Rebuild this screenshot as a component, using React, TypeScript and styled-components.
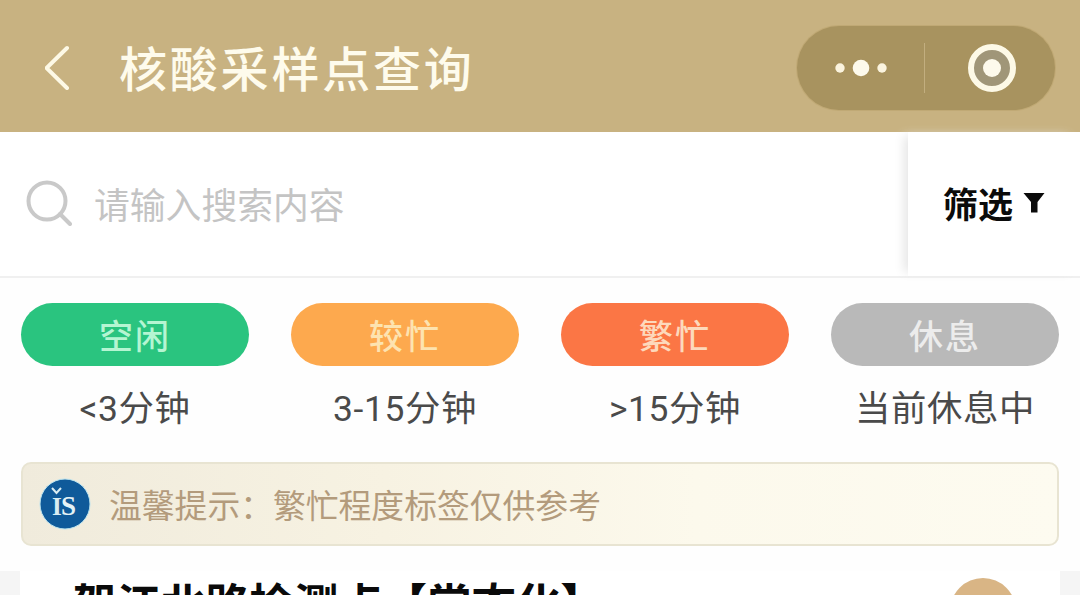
import React from 'react';
import styled, { createGlobalStyle } from 'styled-components';

const GlobalStyle = createGlobalStyle`
  html, body {
    margin: 0;
    padding: 0;
    background: #fefefe;
    overflow: hidden;
    font-family: "Noto Sans CJK SC", "Noto Sans", sans-serif;
  }
`;

const Page = styled.div`
  width: 1080px;
  height: 595px;
  overflow: hidden;
  display: flex;
  flex-direction: column;
`;

const NavBar = styled.header`
  height: 132px;
  flex: none;
  background: #c8b281;
  display: flex;
  align-items: center;
  padding: 0 25px 0 45px;
`;

const BackIcon = styled.svg`
  width: 26px;
  height: 48px;
  flex: none;
`;

const NavTitle = styled.h1`
  flex: 1;
  margin: 0 0 0 48px;
  font-size: 48px;
  font-weight: 500;
  letter-spacing: 2.8px;
  line-height: 60px;
  color: #fefbec;
`;

const Capsule = styled.div`
  width: 258px;
  height: 84px;
  margin-top: 3px;
  border-radius: 42px;
  background: #a8935f;
  box-shadow: 0 0 0 1px #c0a975;
  display: flex;
  align-items: center;
`;

const CapsuleHalf = styled.div<{ $inset?: number }>`
  flex: 1;
  height: 100%;
  box-sizing: border-box;
  padding-left: ${(props) => props.$inset ?? 0}px;
  display: flex;
  align-items: center;
  justify-content: center;
`;

const CapsuleDivider = styled.div`
  width: 1px;
  height: 50px;
  flex: none;
  background: #c2ae7f;
`;

const SearchRow = styled.div`
  height: 146px;
  flex: none;
  background: #fff;
  border-bottom: 2px solid #f0f0f0;
  box-sizing: border-box;
  display: flex;
`;

const SearchBox = styled.div`
  flex: 1;
  display: flex;
  align-items: center;
  padding: 0 0 2px 26px;
  gap: 22px;
`;

const Placeholder = styled.span`
  font-size: 35.8px;
  line-height: 46px;
  color: #c4c4c4;
`;

const FilterButton = styled.div`
  width: 172px;
  flex: none;
  display: flex;
  align-items: center;
  gap: 10px;
  padding: 0 0 2px 35px;
  box-sizing: border-box;
  background: #fff;
  box-shadow: -8px 0 10px -4px #e6e6e6;
`;

const FilterLabel = styled.span`
  font-size: 35px;
  font-weight: 700;
  line-height: 46px;
  color: #0b0b0b;
`;

const Legend = styled.div`
  display: grid;
  grid-template-columns: repeat(4, 228px);
  column-gap: 42px;
  padding: 25px 21px 0;
  height: 184px;
  flex: none;
  box-sizing: border-box;
`;

const LegendItem = styled.div`
  display: flex;
  flex-direction: column;
  align-items: center;
`;

const Pill = styled.div<{ $color: string; $text: string }>`
  width: 100%;
  height: 63px;
  border-radius: 32px;
  background: ${(props) => props.$color};
  color: ${(props) => props.$text};
  font-size: 34px;
  font-weight: 500;
  line-height: 63px;
  text-align: center;
  letter-spacing: 2px;
`;

const LegendLabel = styled.div`
  margin-top: 19px;
  font-family: Roboto, "Noto Sans CJK SC", sans-serif;
  font-size: 35.4px;
  letter-spacing: 0.6px;
  line-height: 48px;
  color: #4a4a4a;
  white-space: nowrap;
`;

const Notice = styled.div`
  margin: 0 21px;
  height: 84px;
  flex: none;
  box-sizing: border-box;
  border: 2px solid #e8e4d2;
  border-radius: 10px;
  background: linear-gradient(90deg, #f0ebdc 0%, #f7f2e2 35%, #fcf9ec 65%, #fdfbf0 100%);
  display: flex;
  align-items: center;
  padding-left: 16px;
  gap: 18px;
`;

const NoticeText = styled.span`
  font-size: 32.8px;
  line-height: 44px;
  color: #b39b7c;
  white-space: nowrap;
`;

const ListArea = styled.div`
  flex: 1;
  margin-top: 25px;
  background: #f5f5f5;
  padding: 0 20px;
`;

const Card = styled.div`
  height: 100%;
  background: #fff;
  display: flex;
  justify-content: space-between;
  padding: 3px 44px 0 52px;
  overflow: hidden;
`;

const CardTitle = styled.div`
  font-size: 44.4px;
  font-weight: 700;
  line-height: 56px;
  color: #0a0a0a;
  white-space: nowrap;
`;

const Avatar = styled.div`
  width: 66px;
  height: 66px;
  flex: none;
  margin-top: 4px;
  border-radius: 50%;
  background: #d9b585;
`;

const legend = [
  { name: '空闲', time: '<3分钟', color: '#2ac47f', text: '#b5f5d2' },
  { name: '较忙', time: '3-15分钟', color: '#fda94e', text: '#fde3b0' },
  { name: '繁忙', time: '>15分钟', color: '#fb7645', text: '#fdd9bc' },
  { name: '休息', time: '当前休息中', color: '#b9b9b9', text: '#ececec' },
];

const App: React.FC = () => {
  return (
    <Page>
      <GlobalStyle />
      <NavBar>
        <BackIcon viewBox="0 0 26 48">
          <path d="M22 6 L1.5 26 L22 46" fill="none" stroke="#fdf9e6" strokeWidth="4" strokeLinecap="round" />
        </BackIcon>
        <NavTitle>核酸采样点查询</NavTitle>
        <Capsule>
          <CapsuleHalf>
            <svg width="54" height="20" viewBox="0 0 54 20">
              <circle cx="6" cy="10" r="4.7" fill="#fbf4df" />
              <circle cx="27" cy="10" r="8.3" fill="#fdfaec" />
              <circle cx="48" cy="10" r="4.7" fill="#fbf4df" />
            </svg>
          </CapsuleHalf>
          <CapsuleDivider />
          <CapsuleHalf $inset={3}>
            <svg width="50" height="50" viewBox="0 0 50 50">
              <circle cx="25" cy="25" r="21" fill="#a09678" stroke="#fdf9e6" strokeWidth="6" />
              <circle cx="25" cy="25" r="9" fill="#fdfaec" />
            </svg>
          </CapsuleHalf>
        </Capsule>
      </NavBar>
      <SearchRow>
        <SearchBox>
          <svg width="46" height="46" viewBox="0 0 46 46">
            <circle cx="21" cy="21" r="18.5" fill="none" stroke="#c9c9c9" strokeWidth="4" />
            <path d="M34 34 L44 44" stroke="#c9c9c9" strokeWidth="4" strokeLinecap="round" />
          </svg>
          <Placeholder>请输入搜索内容</Placeholder>
        </SearchBox>
        <FilterButton>
          <FilterLabel>筛选</FilterLabel>
          <svg width="22" height="22" viewBox="0 0 22 22">
            <path d="M0.5 1 H21.5 L14.5 10 V20.5 H8 V10 Z" fill="#0b0b0b" />
          </svg>
        </FilterButton>
      </SearchRow>
      <Legend>
        {legend.map((item) => (
          <LegendItem key={item.name}>
            <Pill $color={item.color} $text={item.text}>{item.name}</Pill>
            <LegendLabel>{item.time}</LegendLabel>
          </LegendItem>
        ))}
      </Legend>
      <Notice>
        <svg width="52" height="52" viewBox="0 0 52 52">
          <circle cx="26" cy="26" r="25" fill="#0f5a9a" stroke="#b9e3ef" strokeWidth="1" />
          <text x="13" y="37" fontFamily="Liberation Serif" fontWeight="700" fontSize="25" fill="#d8ecf2">I</text>
          <text x="22" y="37" fontFamily="Liberation Serif" fontWeight="700" fontSize="27" fill="#e4f2f6">S</text>
          <path d="M13 10 L17.5 15 L22 10" fill="none" stroke="#d8ecf2" strokeWidth="2" />
        </svg>
        <NoticeText>温馨提示：繁忙程度标签仅供参考</NoticeText>
      </Notice>
      <ListArea>
        <Card>
          <CardTitle>贺江北路检测点【常态化】</CardTitle>
          <Avatar />
        </Card>
      </ListArea>
    </Page>
  );
};

export default App;
